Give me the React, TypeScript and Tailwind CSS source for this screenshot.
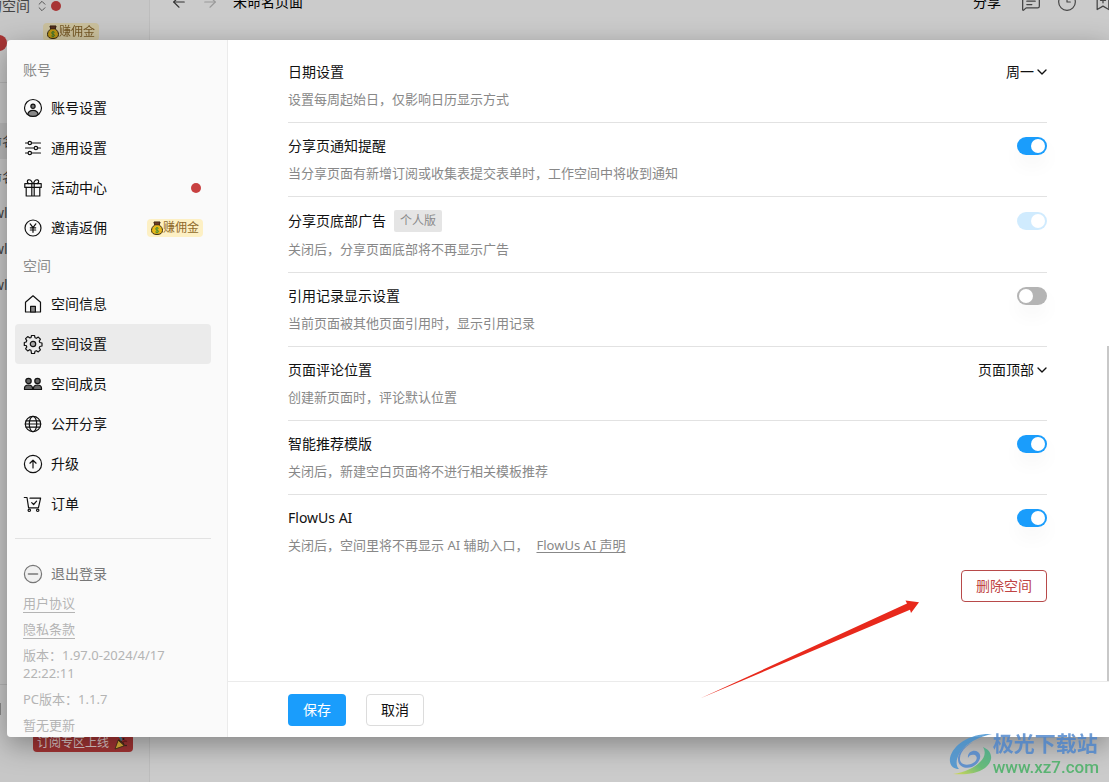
import React from 'react'
import {
  ArrowLeft,
  ArrowRight,
  BookmarkPlus,
  ChevronDown,
  ChevronsUpDown,
  Clock3,
  MessageSquareText,
} from 'lucide-react'

type IconProps = { className?: string; children?: React.ReactNode }

const Icon: React.FC<IconProps> = ({ className = '', children }) => (
  <svg
    className={`h-5 w-5 shrink-0 ${className}`}
    viewBox="0 0 20 20"
    fill="none"
    stroke="currentColor"
    strokeWidth="1.2"
    strokeLinecap="round"
    strokeLinejoin="round"
    aria-hidden="true"
  >
    {children}
  </svg>
)

const AccountIcon = () => (
  <Icon>
    <circle cx="10" cy="10" r="8.5" />
    <circle cx="10" cy="8.2" r="2.1" fill="#777" />
    <path d="M4.8 16.4C5.2 13.6 7.3 12.3 10 12.3s4.8 1.3 5.2 4.1c-3 2.7-7.400 2.700-10.400 0z" fill="#888" />
  </Icon>
)

const SlidersIcon = () => (
  <Icon>
    <path d="M2.500 5H5M8.600 5H17.500M2.500 10H11M14.800 10H17.500M2.500 15H5M8.600 15H17.500" />
    <circle cx="6.800" cy="5" r="1.700" />
    <circle cx="12.900" cy="10" r="1.700" />
    <circle cx="6.800" cy="15" r="1.700" />
  </Icon>
)

const GiftIcon = () => (
  <Icon>
    <rect x="1.800" y="5.600" width="16.400" height="3.800" />
    <path d="M3.200 9.400V18H16.800V9.400M8.800 5.600V18M11.200 5.600V18" />
    <path d="M9.500 5.400C8.500 2.500 6.900 1.400 5.400 1.900S4 4.800 5.600 5.600M10.500 5.400C11.500 2.500 13.100 1.400 14.600 1.900S16 4.800 14.400 5.600" />
  </Icon>
)

const YenIcon = () => (
  <Icon>
    <circle cx="10" cy="10" r="8" />
    <path d="M7.200 5.800L10 9.600l2.800-3.800M10 9.600V14.300M7.300 9.800h5.400M7.300 12h5.400" />
  </Icon>
)

const HomeIcon = () => (
  <Icon>
    <path d="M2.500 8.200L10 1.800l7.500 6.400V18h-15z" />
    <path d="M7.600 18v-5.700h4.800V18z" fill="#888" />
  </Icon>
)

const GearIcon = () => (
  <Icon>
    <path d="M8.500 1.500h3l.5 2.200 1.400.6 1.900-1.200 2.100 2.100-1.200 1.900.6 1.400 2.200.5v3l-2.200.5-.6 1.400 1.200 1.900-2.100 2.100-1.900-1.200-1.400.6-.5 2.200h-3L8 16.300l-1.400-.6-1.900 1.200-2.100-2.100 1.200-1.900-.6-1.400L1.300 11.500v-3l1.900-.5.6-1.400-1.200-1.900 2.100-2.100 1.900 1.200L8 3.700z" />
    <circle cx="10" cy="10" r="2.700" fill="#aaa" />
  </Icon>
)

const MembersIcon = () => (
  <Icon>
    <g fill="#666">
      <circle cx="5.500" cy="7" r="2.700" />
      <circle cx="14.500" cy="7" r="2.700" />
      <path d="M1.500 15.500v-1.300C1.500 12 3.200 11 5.500 11s4 1 4 3.200v1.300z" />
      <path d="M10.500 15.500v-1.300c0-2.200 1.700-3.200 4-3.200s4 1 4 3.200v1.300z" />
    </g>
  </Icon>
)

const GlobeIcon = () => (
  <Icon>
    <circle cx="10" cy="10" r="7.700" />
    <ellipse cx="10" cy="10" rx="3.700" ry="7.700" />
    <path d="M3.100 6.800h13.800M3.100 13.200h13.800M2.300 10h15.400" />
  </Icon>
)

const UpgradeIcon = () => (
  <Icon>
    <circle cx="10" cy="10" r="8.600" />
    <path d="M10 14V6.300M6.900 9.200L10 6.200l3.100 3" />
  </Icon>
)

const CartIcon = () => (
  <Icon>
    <path d="M1.300 3.500H4l1.600 10.300h9.800l2.200-9.600H7" />
    <path d="M8.700 8.600l1.900 1.900 3-3.300" />
    <circle cx="6.300" cy="16.300" r="1.200" />
    <circle cx="14.700" cy="16.300" r="1.200" />
  </Icon>
)

const LogoutIcon = () => (
  <Icon>
    <circle cx="10" cy="10" r="8.600" fill="#f0f0f0" />
    <path d="M5.500 10h9" strokeWidth="1.600" />
  </Icon>
)

const MoneyBag = () => (
  <svg className="h-[14px] w-3 shrink-0" viewBox="0 0 12 14" aria-hidden="true">
    <path d="M3 1.200h6L8.200 4C10.500 5.400 11.500 7.400 11.500 9.400c0 2.800-2.200 4.100-5.500 4.100S.5 12.200.5 9.400C.5 7.400 1.500 5.400 3.800 4z" fill="#e8b818" stroke="#3b2c12" strokeWidth="1" />
    <path d="M3 1h6l-.8 2.900H3.800z" fill="#6b3c26" stroke="#3b2012" strokeWidth=".6" />
    <path d="M7.700 7.400C6.800 6.500 4.500 6.700 4.500 8s3.100.9 3.100 2.300-2.400 1.400-3.300.5M6 6v6.300" fill="none" stroke="#3d8a3a" strokeWidth=".9" />
  </svg>
)

const EarnBadge = () => (
  <span className="flex h-[18px] items-center rounded bg-[#fdf0c4] px-1 text-xs leading-[18px] text-[#8f6a2a]">
    <MoneyBag />
    赚佣金
  </span>
)

const PartyPopper = () => (
  <svg className="h-[14px] w-[14px]" viewBox="0 0 14 14" aria-hidden="true">
    <path d="M1 13L4.200 4.200l6 5.600z" fill="#e2b33a" stroke="#3a2b14" strokeWidth=".8" />
    <path d="M4.200 4.200C5.600 3.600 10.700 8.200 10.200 9.800" fill="none" stroke="#3a2b14" strokeWidth="1.200" />
    <path d="M5 1.500C7.400 1 7.600 3 6.900 4.600" fill="none" stroke="#2f8fb0" strokeWidth="1.400" />
    <path d="M9 6.600c1-1.800 2.600-2 4-.9" fill="none" stroke="#7a2020" strokeWidth="1.600" />
    <circle cx="9.500" cy="3" r="1" fill="#222" />
    <circle cx="12" cy="9.500" r=".8" fill="#222" />
  </svg>
)

type NavItem = { label: string; icon: React.FC; active?: boolean; extra?: React.ReactNode }

const accountItems: NavItem[] = [
  { label: '账号设置', icon: AccountIcon },
  { label: '通用设置', icon: SlidersIcon },
  {
    label: '活动中心',
    icon: GiftIcon,
    extra: <span className="mr-[2px] h-[10px] w-[10px] rounded-full bg-[#c84040]" />,
  },
  { label: '邀请返佣', icon: YenIcon, extra: <EarnBadge /> },
]

const spaceItems: NavItem[] = [
  { label: '空间信息', icon: HomeIcon },
  { label: '空间设置', icon: GearIcon, active: true },
  { label: '空间成员', icon: MembersIcon },
  { label: '公开分享', icon: GlobeIcon },
  { label: '升级', icon: UpgradeIcon },
  { label: '订单', icon: CartIcon },
]

const NavGroup: React.FC<{ title: string; items: NavItem[] }> = ({ title, items }) => (
  <section>
    <h2 className="h-9 px-2 text-sm leading-9 text-[#8a8a8a]">{title}</h2>
    {items.map(({ label, icon: ItemIcon, active, extra }) => (
      <button
        key={label}
        type="button"
        className={`flex h-10 w-full items-center gap-2 rounded px-2 text-left text-sm ${active ? 'bg-[#ebebeb]' : ''}`}
      >
        <ItemIcon />
        <span className="flex-1">{label}</span>
        {extra}
      </button>
    ))}
  </section>
)

const Sidebar = () => (
  <aside className="flex w-[221px] shrink-0 flex-col overflow-hidden border-r border-[#ebebeb] bg-[#fafafa] pt-3 pr-4 pl-2">
    <NavGroup title="账号" items={accountItems} />
    <NavGroup title="空间" items={spaceItems} />
    <hr className="mt-[14px] mb-[15px] border-[#e2e2e2]" />
    <button type="button" className="flex h-10 shrink-0 items-center gap-2 px-2 text-sm text-[#777]">
      <LogoutIcon />
      退出登录
    </button>
    <div className="flex flex-col items-start gap-2 px-2 text-[13px] leading-[18px] text-[#b4b4b4]">
      <a href="#terms" className="shadow-[0_1px_0_#b4b4b4]">用户协议</a>
      <a href="#privacy" className="shadow-[0_1px_0_#b4b4b4]">隐私条款</a>
      <p>版本：1.97.0-2024/4/17 22:22:11</p>
      <p>PC版本：1.1.7</p>
      <p>暂无更新</p>
    </div>
  </aside>
)

const Toggle: React.FC<{ id: string; on?: boolean; disabled?: boolean }> = ({ id, on, disabled }) => (
  <input
    id={id}
    type="checkbox"
    role="switch"
    defaultChecked={on}
    disabled={disabled}
    className="flex h-[18px] w-[30px] appearance-none items-center rounded-full bg-[#b4b4b4] px-[2px] shadow-[0_10px_20px_rgba(0,0,0,0.04)] before:h-[14px] before:w-[14px] before:rounded-full before:bg-white checked:justify-end checked:bg-[#1a9dfc] disabled:opacity-20 disabled:shadow-none"
  />
)

const Dropdown: React.FC<{ id: string; options: string[] }> = ({ id, options }) => (
  <span className="-mr-[3px] flex items-center">
    <select id={id} className="appearance-none bg-transparent text-sm leading-5">
      {options.map((option) => (
        <option key={option}>{option}</option>
      ))}
    </select>
    <ChevronDown className="pointer-events-none h-4 w-4" strokeWidth={2} />
  </span>
)

type RowProps = {
  id: string
  title: string
  tag?: string
  desc: React.ReactNode
  children: React.ReactNode
}

const SettingRow: React.FC<RowProps> = ({ id, title, tag, desc, children }) => (
  <div className="border-b border-[#e2e2e2] py-[13px] last:border-b-0">
    <div className="flex items-center justify-between">
      <div className="flex items-center gap-2">
        <label htmlFor={id} className="text-sm leading-5">{title}</label>
        {tag && <span className="rounded-xs bg-[#e5e5e5] px-[6px] text-xs leading-[22px] text-[#8a8a8a]">{tag}</span>}
      </div>
      {children}
    </div>
    <p className="mt-[7px] text-[13px] leading-5 text-[#888]">{desc}</p>
  </div>
)

const Settings = () => (
  <main className="flex min-w-0 flex-1 flex-col bg-white">
    <div className="relative min-h-0 flex-1 overflow-hidden pt-[9px] pr-[62px] pl-[60px]">
      <div>
        <SettingRow id="week" title="日期设置" desc="设置每周起始日，仅影响日历显示方式">
          <Dropdown id="week" options={['周一', '周日']} />
        </SettingRow>
        <SettingRow id="notice" title="分享页通知提醒" desc="当分享页面有新增订阅或收集表提交表单时，工作空间中将收到通知">
          <Toggle id="notice" on />
        </SettingRow>
        <SettingRow id="ads" title="分享页底部广告" tag="个人版" desc="关闭后，分享页面底部将不再显示广告">
          <Toggle id="ads" on disabled />
        </SettingRow>
        <SettingRow id="refs" title="引用记录显示设置" desc="当前页面被其他页面引用时，显示引用记录">
          <Toggle id="refs" />
        </SettingRow>
        <SettingRow id="comment" title="页面评论位置" desc="创建新页面时，评论默认位置">
          <Dropdown id="comment" options={['页面顶部', '页面底部']} />
        </SettingRow>
        <SettingRow id="template" title="智能推荐模版" desc="关闭后，新建空白页面将不进行相关模板推荐">
          <Toggle id="template" on />
        </SettingRow>
        <SettingRow
          id="ai"
          title="FlowUs AI"
          desc={
            <>
              关闭后，空间里将不再显示 AI 辅助入口，
              <a href="#ai" className="ml-2 underline underline-offset-2">FlowUs AI 声明</a>
            </>
          }
        >
          <Toggle id="ai" on />
        </SettingRow>
      </div>
      <div className="mt-[2px] flex justify-end">
        <button type="button" className="h-8 rounded border border-[#b84a4a] px-[14px] text-sm text-[#c04343]">
          删除空间
        </button>
      </div>
      <span className="absolute right-0 bottom-0 h-[335px] w-[2px] bg-[#c8c8c8]" />
    </div>
    <footer className="flex h-14 shrink-0 items-center gap-5 border-t border-[#ebebeb] pl-[60px]">
      <button type="button" className="h-8 w-[58px] rounded bg-[#1a9dfc] text-sm text-white">保存</button>
      <button type="button" className="h-8 w-[58px] rounded border border-[#dcdcdc] text-sm">取消</button>
    </footer>
  </main>
)

const Workspace = () => (
  <div className="flex min-h-screen bg-[#cbcbcb]">
    <aside className="flex w-[150px] shrink-0 flex-col overflow-hidden border-r border-[#bdbdbd] bg-[#c7c7c7] text-sm text-[#444]">
      <div className="flex h-3 items-center">
        <span className="-ml-3 whitespace-nowrap">的空间</span>
        <ChevronsUpDown className="ml-[5px] h-[14px] w-[14px]" strokeWidth={1.500} />
        <span className="ml-[2px] h-[10px] w-[10px] rounded-full bg-[#a83535]" />
      </div>
      <div className="mt-[11px] ml-[43px] flex brightness-80">
        <EarnBadge />
      </div>
      <span className="-mt-[6px] -ml-[9px] h-4 w-4 rounded-full bg-[#a83535]" />
      <div className="mt-[31px] flex flex-col border-t border-[#b5b5b5] pt-10">
        <span className="-ml-5 h-9 bg-[#b9b9b9] pl-2 leading-9">命名</span>
        <span className="-ml-3 h-9 leading-9">命名</span>
        <span className="-ml-[7px] h-9 leading-9">wl</span>
        <span className="-ml-[7px] h-9 leading-9">wl</span>
        <span className="-ml-[7px] h-9 leading-9">wl</span>
      </div>
      <div className="mt-auto border-t border-[#b5b5b5] pt-[18px] pb-[19px]">
        <span className="block h-3 w-px bg-[#888]" />
      </div>
      <div className="mb-[30px] ml-[33px] flex h-[18px] w-[100px] items-center gap-[5px] rounded bg-[#a33434] px-1 text-xs whitespace-nowrap text-[#e0cccc]">
        订阅专区上线
        <PartyPopper />
      </div>
    </aside>
    <header className="flex h-1 flex-1 items-center pl-5 text-sm text-black">
      <ArrowLeft className="h-[18px] w-[18px] text-[#333]" strokeWidth={1.500} />
      <ArrowRight className="ml-[13px] h-[18px] w-[18px] text-[#999]" strokeWidth={1.500} />
      <span className="ml-[14px] flex-1">未命名页面</span>
      <span>分享</span>
      <MessageSquareText className="ml-5 h-5 w-5 text-[#444]" strokeWidth={1.500} />
      <Clock3 className="ml-4 h-5 w-5 text-[#444]" strokeWidth={1.400} />
      <BookmarkPlus className="-mr-1 ml-4 h-5 w-5 shrink-0 text-[#444]" strokeWidth={1.500} />
    </header>
  </div>
)

const Arrow = () => (
  <svg className="pointer-events-none absolute top-[600px] left-[700px] h-[100px] w-[220px]" viewBox="0 0 220 100" aria-hidden="true">
    <path d="M0 98.500L207 3.600 205.500.4 219 2.300 211 13 210 9.800Z" fill="#e8291c" />
  </svg>
)

const Watermark = () => (
  <div className="absolute right-[10px] bottom-[3px] flex items-center opacity-80">
    <svg className="h-11 w-11" viewBox="0 0 44 44" aria-hidden="true">
      <defs>
        <linearGradient id="swoosh" x1="0" y1="1" x2="1" y2="0">
          <stop offset="0" stopColor="#d9dc3c" />
          <stop offset=".5" stopColor="#4fb765" />
          <stop offset="1" stopColor="#3aa985" />
        </linearGradient>
      </defs>
      <path d="M43 1C22 0 4 11 1 25c-1 7 3 11 9 11C5 31 8 20 18 12 26 6 34 3 43 1z" fill="#3f8fd0" />
      <path d="M33 6C20 9 10 18 11 27c1 5 8 6 13 3 4-2 5-6 2-8-3-1-6 0-7 3-1-6 6-9 10-6 5 4 1 12-6 15-7 2-14 0-14-8C9 17 20 9 33 6z" fill="#4a84cc" />
      <path d="M34 14c10 4 11 14 2 21-8 6-21 7-32 6 12-2 21-6 27-12 5-5 6-10 3-15z" fill="url(#swoosh)" />
    </svg>
    <div className="flex flex-col">
      <span className="text-[21px] leading-6 font-bold text-[#4a84cc]">极光下载站</span>
      <span className="font-[Roboto,sans-serif] text-[17px] leading-6 font-medium text-[#3fae5e]">www.xz7.com</span>
    </div>
  </div>
)

export default function App() {
  return (
    <div className="relative min-h-screen overflow-hidden font-['Noto_Sans','Noto_Sans_CJK_SC',sans-serif] text-[#111]">
      <Workspace />
      <div
        role="dialog"
        aria-label="空间设置"
        className="absolute top-10 right-0 bottom-[45px] left-[7px] flex overflow-hidden rounded-l shadow-[0_8px_28px_rgba(0,0,0,0.35)]"
      >
        <Sidebar />
        <Settings />
      </div>
      <Arrow />
      <Watermark />
    </div>
  )
}
